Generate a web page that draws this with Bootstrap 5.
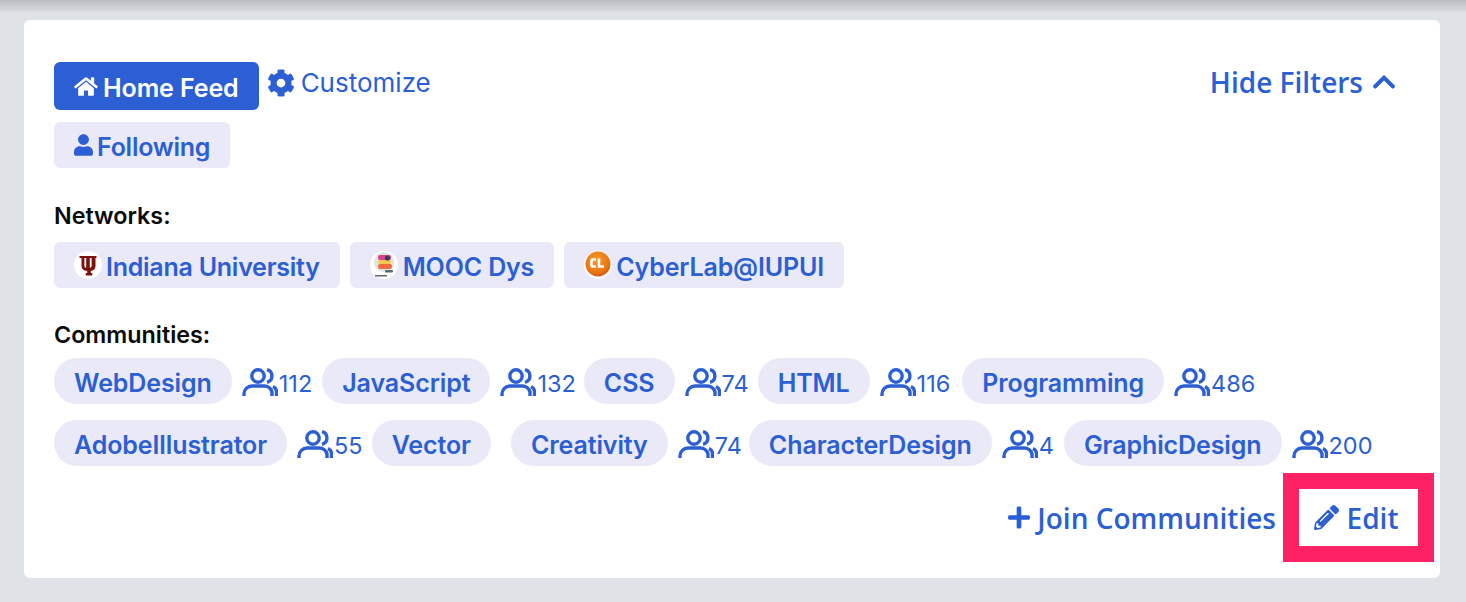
<!DOCTYPE html>
<html lang="en"><head><meta charset="utf-8"><title>Feed filters</title>
<link href="https://cdn.jsdelivr.net/npm/bootstrap@5.3.0/dist/css/bootstrap.min.css" rel="stylesheet">
<style>
html,body{height:602px;overflow:hidden}
body{background:#dfe2e7;font-family:"Inter",sans-serif;color:#2b5fd3}
.top-shade{height:14px;background:linear-gradient(#b9bbc0,#dfe2e7)}
.panel{margin:6px 26px 0 24px;height:558px;background:#fff;border-radius:6px;padding:42px 6px 16px 30px;display:flex;flex-direction:column}
.fi{fill:currentColor;flex:none}
.chip{display:inline-flex;align-items:center;height:46px;padding:6px 20px 0;background:#e9e9f7;color:#2b5fd3;border-radius:6px;font-size:25px;font-weight:600;letter-spacing:-.25px;text-decoration:none;white-space:nowrap}
.chip>svg{margin-top:-6px}
.chip.active-feed{background:#2b5fd3;color:#fff;height:48px;letter-spacing:-.1px}
.chip.round{border-radius:23px;letter-spacing:-.1px}
.chip.roomy{letter-spacing:-.15px}
.head-row{display:flex;justify-content:space-between;align-items:flex-start;padding-right:37px}
.plain-link{color:#2b5fd3;text-decoration:none}
.customize{font-size:26px;display:inline-flex;align-items:center;gap:6px;margin-left:8px;line-height:40px;padding-top:1px}
.customize svg{margin-top:-1px}
.sans-link{font-family:"Open Sans",sans-serif;font-size:28px;font-weight:600;line-height:40px;display:inline-flex;align-items:center;white-space:nowrap}
.label-txt{font-size:23.300px;font-weight:600;color:#0a0a0a;line-height:30px}
.count{display:inline-flex;align-items:center;font-size:23.500px;margin:0 10px;padding-top:6px;color:#2b5fd3}
.count svg{margin:-4px 1px 0 0}
.count.less-1{margin-right:9px}
.count.less-2{margin-right:8px}
.count.less-3{margin-right:7px}
.count.more-2{margin-right:12px}
.comm-row{display:flex;height:46px;margin-bottom:16px}
.comm-row.last-row{margin-bottom:7px}
.foot-row{display:flex;justify-content:flex-end;align-items:center}
.edit-box{border:16px solid #ff2165;height:89px;width:151px;display:flex;align-items:center;justify-content:center;margin-left:7px;padding-right:5px}
.logo{width:28px;height:28px;flex:none;margin-right:4px}
.logo.wide-gap{margin-right:5px}
</style></head><body>
<svg width="0" height="0" class="position-absolute"><defs>
<symbol id="ic-users" viewBox="0 0 36 28"><g fill="none" stroke="currentColor" stroke-width="3.400"><circle cx="16" cy="8" r="6.200"/><path d="M2 28v-2a8 8 0 0 1 8-8h12a8 8 0 0 1 8 6v4M25 1.700a6.500 6.500 0 0 1 0 12.600M31 18.500a6 6 0 0 1 3.500 6V28"/></g></symbol>
<radialGradient id="cl-grad" cx=".45" cy=".35" r=".7"><stop offset="0" stop-color="#f59a2c"/><stop offset=".75" stop-color="#e8730f"/><stop offset="1" stop-color="#c9431b"/></radialGradient>
</defs></svg>
<div class="top-shade"></div>
<div class="panel">
 <div class="head-row">
   <div class="d-flex align-items-start">
    <a href="#" class="chip active-feed"><svg class="fi" width="24" height="21" viewBox="0 0 576 512" style="margin-right:5px"><path d="M280.37 148.26L96 300.11V464a16 16 0 0 0 16 16l112.06-.29a16 16 0 0 0 15.92-16V368a16 16 0 0 1 16-16h64a16 16 0 0 1 16 16v95.64a16 16 0 0 0 16 16.05L464 480a16 16 0 0 0 16-16V300L295.67 148.26a12.19 12.19 0 0 0-15.3 0zM571.6 251.47L488 182.56V44.05a12 12 0 0 0-12-12h-56a12 12 0 0 0-12 12v72.61L318.47 43a48 48 0 0 0-61 0L4.34 251.47a12 12 0 0 0-1.6 16.9l25.5 31A12 12 0 0 0 45.15 301l235.22-193.74a12.19 12.19 0 0 1 15.3 0L530.9 301a12 12 0 0 0 16.9-1.6l25.5-31a12 12 0 0 0-1.7-16.93z"/></svg>Home Feed</a>
    <a href="#" class="plain-link customize"><svg class="fi" width="28" height="28" viewBox="0 0 512 512"><path d="M487.4 315.7l-42.6-24.6c4.3-23.2 4.3-47 0-70.2l42.6-24.6c4.9-2.8 7.1-8.6 5.5-14-11.1-35.6-30-67.8-54.7-94.6-3.8-4.1-10-5.1-14.8-2.3L380.8 110c-17.9-15.4-38.5-27.3-60.8-35.1V25.8c0-5.6-3.9-10.5-9.4-11.7-36.7-8.2-74.3-7.8-109.2 0-5.5 1.2-9.4 6.1-9.4 11.7V75c-22.2 7.9-42.8 19.8-60.8 35.1L88.7 85.5c-4.9-2.8-11-1.9-14.8 2.3-24.7 26.7-43.6 58.9-54.7 94.6-1.7 5.4.6 11.2 5.5 14L67.3 221c-4.3 23.2-4.3 47 0 70.2l-42.6 24.6c-4.9 2.8-7.1 8.6-5.5 14 11.1 35.6 30 67.8 54.7 94.6 3.8 4.1 10 5.1 14.8 2.3l42.6-24.6c17.9 15.4 38.5 27.3 60.8 35.1v49.2c0 5.6 3.9 10.5 9.4 11.7 36.7 8.2 74.3 7.8 109.2 0 5.5-1.2 9.4-6.1 9.4-11.7v-49.2c22.2-7.9 42.8-19.8 60.8-35.1l42.6 24.6c4.9 2.8 11 1.9 14.8-2.3 24.7-26.7 43.6-58.9 54.7-94.6 1.5-5.5-.7-11.3-5.6-14.1zM256 336c-44.1 0-80-35.9-80-80s35.9-80 80-80 80 35.9 80 80-35.9 80-80 80z"/></svg>Customize</a>
   </div>
  <a href="#" class="plain-link sans-link">Hide Filters<svg class="fi ms-2" width="26" height="26" viewBox="0 0 448 512"><path d="M240.971 130.524l194.343 194.343c9.373 9.373 9.373 24.569 0 33.941l-22.667 22.667c-9.357 9.357-24.522 9.375-33.901.04L224 227.495 69.255 381.516c-9.379 9.335-24.544 9.317-33.901-.04l-22.667-22.667c-9.373-9.373-9.373-24.569 0-33.941L207.03 130.525c9.372-9.373 24.568-9.373 33.941-.001z"/></svg></a>
 </div>
 <div class="d-flex" style="margin-top:12px"><a href="#" class="chip"><svg class="fi me-1" width="19" height="22" viewBox="0 0 448 512"><path d="M224 256c70.7 0 128-57.3 128-128S294.7 0 224 0 96 57.3 96 128s57.3 128 128 128zm89.6 32h-16.7c-22.2 10.2-46.9 16-72.9 16s-50.6-5.8-72.9-16h-16.7C60.2 288 0 348.2 0 422.4V464c0 26.5 21.5 48 48 48h352c26.5 0 48-21.5 48-48v-41.6c0-74.2-60.2-134.4-134.4-134.4z"/></svg>Following</a></div>

 <div class="label-txt" style="margin-top:33px">Networks:</div>
 <div class="d-flex" style="gap:10px;margin-top:11px">
  <a href="#" class="chip"><svg class="logo" viewBox="0 0 28 28"><circle cx="14" cy="14" r="14" fill="#fff"/><path fill="#7d110c" d="M5.500 5h6v2h-1.100v8c0 1 .7 1.500 1.800 1.700V7H11V5h6v2h-1.200v9.700c1.100-.2 1.800-.7 1.800-1.700V7h-1.100V5h6v2h-1v8c0 3-2 4.600-4.700 4.900V22h1.400v2.500h-6.400V22h1.400v-2.100C9.500 19.600 7.500 18 7.500 15V7h-2z"/></svg>Indiana University</a>
  <a href="#" class="chip roomy"><svg class="logo wide-gap" viewBox="0 0 28 28"><circle cx="14" cy="14" r="14" fill="#fff"/><circle cx="14" cy="11" r="10" fill="#dde6e4"/><rect x="8" y="4" width="13" height="5" rx="2" fill="#d9408f"/><rect x="8" y="9" width="13" height="4" rx="2" fill="#f3c74d"/><rect x="8" y="13" width="14" height="5" rx="2" fill="#f0693f"/><circle cx="17.500" cy="7" r="2.600" fill="#39404a"/><rect x="15" y="19" width="8" height="2.500" rx="1" fill="#5a6b6d"/><rect x="5" y="24" width="12" height="1.500" fill="#666"/></svg>MOOC Dys</a>
  <a href="#" class="chip roomy"><svg class="logo" viewBox="0 0 28 28"><circle cx="14" cy="14" r="14" fill="#fff"/><circle cx="14" cy="13" r="12.500" fill="url(#cl-grad)"/><path d="M12 8.500H8.500a1 1 0 0 0-1 1v5a1 1 0 0 0 1 1H12M15 7.500v8h5" fill="none" stroke="#fff" stroke-width="2.600"/></svg>CyberLab@IUPUI</a>
 </div>

 <div class="label-txt" style="margin-top:32px">Communities:</div>
 <div class="comm-row" style="margin-top:8px">
  <a href="#" class="chip round">WebDesign</a>
  <span class="count"><svg width="36" height="28"><use href="#ic-users"/></svg>112</span>
  <a href="#" class="chip round">JavaScript</a>
  <span class="count less-2"><svg width="36" height="28"><use href="#ic-users"/></svg>132</span>
  <a href="#" class="chip round">CSS</a>
  <span class="count less-1"><svg width="36" height="28"><use href="#ic-users"/></svg>74</span>
  <a href="#" class="chip round">HTML</a>
  <span class="count more-2"><svg width="36" height="28"><use href="#ic-users"/></svg>116</span>
  <a href="#" class="chip round">Programming</a>
  <span class="count"><svg width="36" height="28"><use href="#ic-users"/></svg>486</span>
 </div>
 <div class="comm-row last-row">
  <a href="#" class="chip round">AdobeIllustrator</a>
  <span class="count less-1"><svg width="36" height="28"><use href="#ic-users"/></svg>55</span>
  <a href="#" class="chip round">Vector</a>
  <span class="count"></span>
  <a href="#" class="chip round">Creativity</a>
  <span class="count less-3"><svg width="36" height="28"><use href="#ic-users"/></svg>74</span>
  <a href="#" class="chip round">CharacterDesign</a>
  <span class="count"><svg width="36" height="28"><use href="#ic-users"/></svg>4</span>
  <a href="#" class="chip round">GraphicDesign</a>
  <span class="count"><svg width="36" height="28"><use href="#ic-users"/></svg>200</span>
 </div>
 <div class="foot-row">
  <a href="#" class="plain-link sans-link"><svg class="fi" width="22" height="25" viewBox="0 0 448 512" style="margin-right:7px"><path d="M416 208H272V64c0-17.670-14.330-32-32-32h-32c-17.670 0-32 14.330-32 32v144H32c-17.670 0-32 14.330-32 32v32c0 17.670 14.330 32 32 32h144v144c0 17.670 14.330 32 32 32h32c17.670 0 32-14.330 32-32V304h144c17.670 0 32-14.330 32-32v-32c0-17.670-14.330-32-32-32z"/></svg>Join Communities</a>
  <div class="edit-box"><a href="#" class="plain-link sans-link"><svg class="fi me-2" width="25" height="25" viewBox="0 0 512 512"><path d="M497.900 142.100l-46.100 46.100c-4.700 4.700-12.300 4.700-17 0l-111-111c-4.700-4.700-4.700-12.300 0-17l46.100-46.100c18.700-18.700 49.100-18.700 67.900 0l60.100 60.100c18.800 18.700 18.800 49.100 0 67.900zM284.200 99.800L21.600 362.400.4 483.900c-2.900 16.400 11.400 30.600 27.800 27.800l121.500-21.300 262.600-262.600c4.700-4.700 4.700-12.300 0-17l-111-111c-4.800-4.700-12.400-4.700-17.100 0zM124.100 339.900c-5.500-5.500-5.500-14.300 0-19.800l154-154c5.500-5.500 14.300-5.500 19.800 0s5.500 14.300 0 19.800l-154 154c-5.500 5.500-14.300 5.500-19.800 0zM88 424h48v36.300l-64.500 11.300-31.100-31.100L51.700 376H88v48z"/></svg>Edit</a></div>
 </div>
</div>
<script src="https://cdn.jsdelivr.net/npm/bootstrap@5.3.0/dist/js/bootstrap.bundle.min.js"></script>
</body></html>
